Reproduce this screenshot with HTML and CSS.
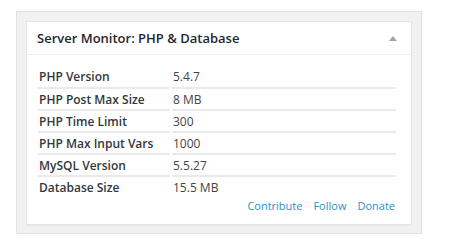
FILE: index.html
```html
<!DOCTYPE html>
<html>
<head>
<meta charset="utf-8">
<link rel="stylesheet" href="styles.css">
</head>
<body>
<div class="frame">
  <div class="widget">
    <div class="head">
      <h2 class="title">Server Monitor: PHP &amp; Database</h2>
      <span class="toggle"></span>
    </div>
    <div class="inside">
      <table class="stats">
        <tr><th>PHP Version</th><td>5.4.7</td></tr>
        <tr><th>PHP Post Max Size</th><td>8 MB</td></tr>
        <tr><th>PHP Time Limit</th><td>300</td></tr>
        <tr><th>PHP Max Input Vars</th><td>1000</td></tr>
        <tr><th>MySQL Version</th><td>5.5.27</td></tr>
        <tr><th>Database Size</th><td>15.5 MB</td></tr>
      </table>
      <div class="links">
        <a href="#">Contribute</a>
        <a href="#">Follow</a>
        <a href="#">Donate</a>
      </div>
    </div>
  </div>
</div>
</body>
</html>
```
FILE: styles.css
```css
html, body {
  margin: 0;
  padding: 0;
  background: #fff;
  font-family: "Open Sans", "Noto Sans", sans-serif;
}
.frame {
  margin: 11px 0 0 16px;
  width: 386px;
  height: 203px;
  padding: 9px;
  background: #f1f1f1;
  border: 1px solid #e2e2e2;
}
.widget {
  background: #fff;
  border: 1px solid #e5e5e5;
  box-shadow: 0 1px 1px rgba(0,0,0,0.04);
  height: 202px;
  display: flex;
  flex-direction: column;
}
.head {
  display: flex;
  align-items: center;
  justify-content: space-between;
  height: 32px;
  border-bottom: 1px solid #eee;
  padding: 0 14px 0 10px;
}
.title {
  margin: 0;
  font-size: 13px;
  font-weight: 600;
  color: #23282d;
}
.toggle {
  width: 0;
  height: 0;
  border-left: 4px solid transparent;
  border-right: 4px solid transparent;
  border-bottom: 5px solid #a0a5aa;
}
.inside {
  padding: 11px 13px 0 11px;
}
.stats {
  border-collapse: separate;
  border-spacing: 2px 0;
  margin-left: -2px;
  width: calc(100% + 2px);
  font-size: 12px;
  color: #444;
}
.stats th, .stats td {
  text-align: left;
  height: 21px;
  padding: 0 0 0 1px;
  vertical-align: middle;
}
.stats th {
  font-weight: 600;
  color: #32373c;
  width: 131px;
}
.stats tr + tr th, .stats tr + tr td {
  border-top: 2px solid #eaeaea;
  height: 20px;
}
.links {
  display: flex;
  justify-content: flex-end;
  gap: 11px;
  margin-top: 1px;
  padding-right: 3px;
  font-size: 11px;
}
.links a {
  color: #2e8fc0;
  text-decoration: none;
}
```
